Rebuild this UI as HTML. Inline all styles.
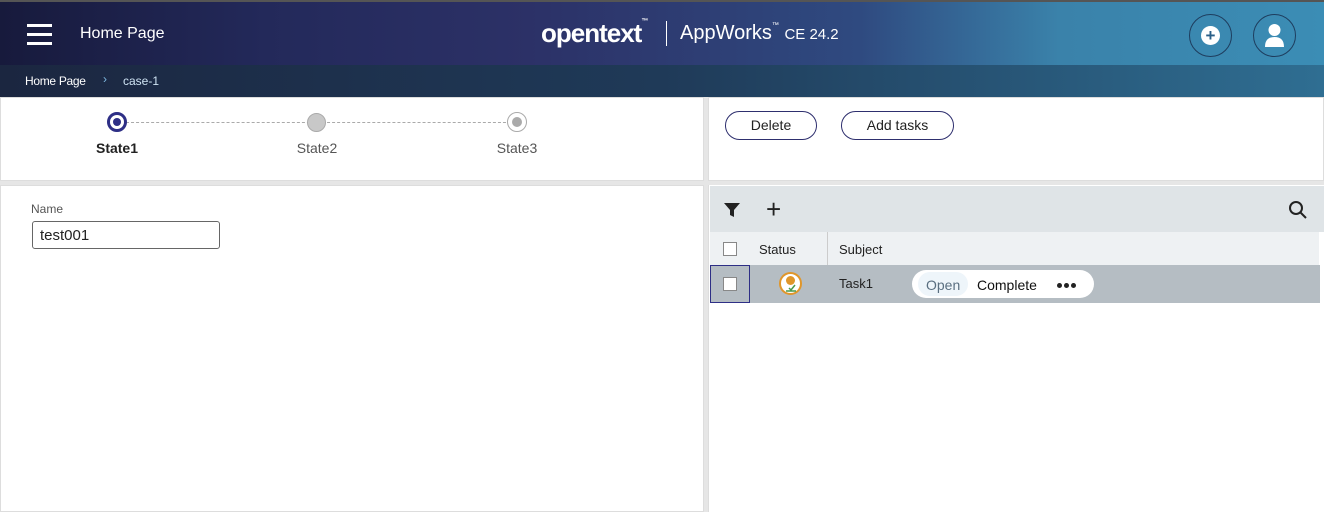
<!DOCTYPE html>
<html><head><style>
*{box-sizing:border-box;margin:0;padding:0}
body{width:1324px;height:512px;overflow:hidden;font-family:"Liberation Sans",sans-serif;background:#e6e6e6;position:relative}
.a{position:absolute}
</style></head><body>
<div class="a" style="left:0;top:0;width:1324px;height:65px;background:linear-gradient(90deg,#171a3c 0%,#23295a 20%,#2c3167 40%,#2f4a80 65%,#3a82aa 80%,#3b8db5 100%);border-top:2px solid #555"></div>
<div class="a" style="left:0;top:65px;width:1324px;height:32px;background:linear-gradient(90deg,#1b2640,#1f3a58 50%,#2f6e92)"></div>
<div class="a" style="left:27px;top:24px;width:25px;height:3px;background:#fff;box-shadow:0 9px 0 #fff,0 18px 0 #fff"></div>
<div class="a" style="left:80px;top:25px;color:#fff;font-size:16px">Home Page</div>
<div class="a" style="left:541px;top:18px;color:#fff;font-size:26px;font-weight:bold;letter-spacing:-1px">opentext<span style="font-size:7px;vertical-align:top">™</span></div>
<div class="a" style="left:666px;top:21px;width:1px;height:25px;background:#fff"></div>
<div class="a" style="left:680px;top:22px;color:#fff;font-size:20px">AppWorks<span style="font-size:7px;vertical-align:top">™</span> <span style="font-size:15px">CE 24.2</span></div>
<div class="a" style="left:1189px;top:14px;width:43px;height:43px;border-radius:50%;border:1.5px solid #1e3d5e"></div>
<div class="a" style="left:1201px;top:26px;width:19px;height:19px;border-radius:50%;background:#fff;color:#2a5f88;font-weight:bold;font-size:17px;line-height:19px;text-align:center">+</div>
<div class="a" style="left:1253px;top:14px;width:43px;height:43px;border-radius:50%;border:1.5px solid #1e3d5e"></div>
<svg class="a" style="left:1262px;top:22px" width="25" height="27"><circle cx="12.5" cy="8" r="6" fill="#fff"/><path d="M3 25 Q3 15 12.5 15 Q22 15 22 25Z" fill="#fff"/></svg>
<div class="a" style="left:25px;top:74px;color:#fff;font-size:12px;letter-spacing:-0.3px">Home Page</div>
<div class="a" style="left:103px;top:72px;color:#7fb8e0;font-size:12px">›</div>
<div class="a" style="left:123px;top:74px;color:#cfe3f3;font-size:12px">case-1</div>

<div class="a" style="left:0;top:97px;width:704px;height:84px;background:#fff;border:1px solid #ddd"></div>
<div class="a" style="left:126px;top:122px;width:385px;border-top:1.5px dashed #aaa"></div>
<div class="a" style="left:107px;top:112px;width:20px;height:20px;border-radius:50%;border:3px solid #2e2f86;background:#fff"></div>
<div class="a" style="left:113px;top:118px;width:8px;height:8px;border-radius:50%;background:#2e2f86"></div>
<div class="a" style="left:307px;top:113px;width:19px;height:19px;border-radius:50%;background:#c8c8c8;border:1px solid #aaa"></div>
<div class="a" style="left:507px;top:112px;width:20px;height:20px;border-radius:50%;border:1px solid #aaa;background:#fff"></div>
<div class="a" style="left:512px;top:117px;width:10px;height:10px;border-radius:50%;background:#aaa"></div>
<div class="a" style="left:82px;top:140px;font-size:14px;font-weight:bold;color:#222;width:70px;text-align:center">State1</div>
<div class="a" style="left:282px;top:140px;font-size:14px;color:#555;width:70px;text-align:center">State2</div>
<div class="a" style="left:482px;top:140px;font-size:14px;color:#555;width:70px;text-align:center">State3</div>

<div class="a" style="left:0;top:185px;width:704px;height:327px;background:#fff;border:1px solid #ddd"></div>
<div class="a" style="left:31px;top:202px;font-size:12px;color:#555">Name</div>
<div class="a" style="left:32px;top:221px;width:188px;height:28px;border:1px solid #666;border-radius:3px;font-size:15px;padding:5px 7px;color:#222">test001</div>

<div class="a" style="left:708px;top:97px;width:616px;height:84px;background:#fff;border:1px solid #ddd"></div>
<div class="a" style="left:725px;top:111px;width:92px;height:29px;border:1px solid #2e2f6e;border-radius:15px;font-size:14px;text-align:center;line-height:27px;color:#222">Delete</div>
<div class="a" style="left:841px;top:111px;width:113px;height:29px;border:1px solid #2e2f6e;border-radius:15px;font-size:14px;text-align:center;line-height:27px;color:#222">Add tasks</div>

<div class="a" style="left:708px;top:185px;width:616px;height:327px;background:#fff;border-left:1px solid #ddd"></div>
<div class="a" style="left:710px;top:186px;width:614px;height:46px;background:#dfe4e7"></div>
<svg class="a" style="left:723px;top:202px" width="18" height="16"><path d="M1 1H17L11 8V15L7 13V8Z" fill="#222"/></svg>
<div class="a" style="left:766px;top:194px;font-size:26px;color:#222;font-weight:300">+</div>
<svg class="a" style="left:1288px;top:200px" width="20" height="20"><circle cx="8" cy="8" r="6" stroke="#222" stroke-width="2" fill="none"/><path d="M12.5 12.5L18 18" stroke="#222" stroke-width="2"/></svg>
<div class="a" style="left:710px;top:232px;width:609px;height:33px;background:#eef1f3"></div>
<div class="a" style="left:827px;top:232px;width:1px;height:33px;background:#ccc"></div>
<div class="a" style="left:723px;top:242px;width:14px;height:14px;border:1px solid #888;background:#fff"></div>
<div class="a" style="left:759px;top:242px;font-size:13px;color:#222">Status</div>
<div class="a" style="left:839px;top:242px;font-size:13px;color:#222">Subject</div>
<div class="a" style="left:710px;top:265px;width:610px;height:38px;background:#b5bdc3"></div>
<div class="a" style="left:710px;top:265px;width:40px;height:38px;border:1px solid #2e2f86"></div>
<div class="a" style="left:723px;top:277px;width:14px;height:14px;border:1px solid #888;background:#fff"></div>
<div class="a" style="left:779px;top:272px;width:23px;height:23px;border-radius:50%;background:#fff;border:2px solid #e0962a"></div>
<div class="a" style="left:786px;top:276px;width:9px;height:9px;border-radius:50%;background:#e0962a"></div>
<svg class="a" style="left:784px;top:280px" width="14" height="12"><path d="M2 11H12M5 8L7 10L11 5" stroke="#4a9a4a" stroke-width="1.5" fill="none"/></svg>
<div class="a" style="left:839px;top:276px;font-size:13px;color:#222">Task1</div>
<div class="a" style="left:912px;top:270px;width:182px;height:28px;border-radius:14px;background:#fff"></div>
<div class="a" style="left:918px;top:272px;width:50px;height:24px;border-radius:12px;background:#eef5fa"></div>
<div class="a" style="left:926px;top:277px;font-size:14px;color:#5a6f80">Open</div>
<div class="a" style="left:977px;top:277px;font-size:14px;color:#111">Complete</div>
<div class="a" style="left:1057px;top:283px;width:5px;height:5px;border-radius:50%;background:#222;box-shadow:7px 0 0 #222,14px 0 0 #222"></div>
</body></html>
